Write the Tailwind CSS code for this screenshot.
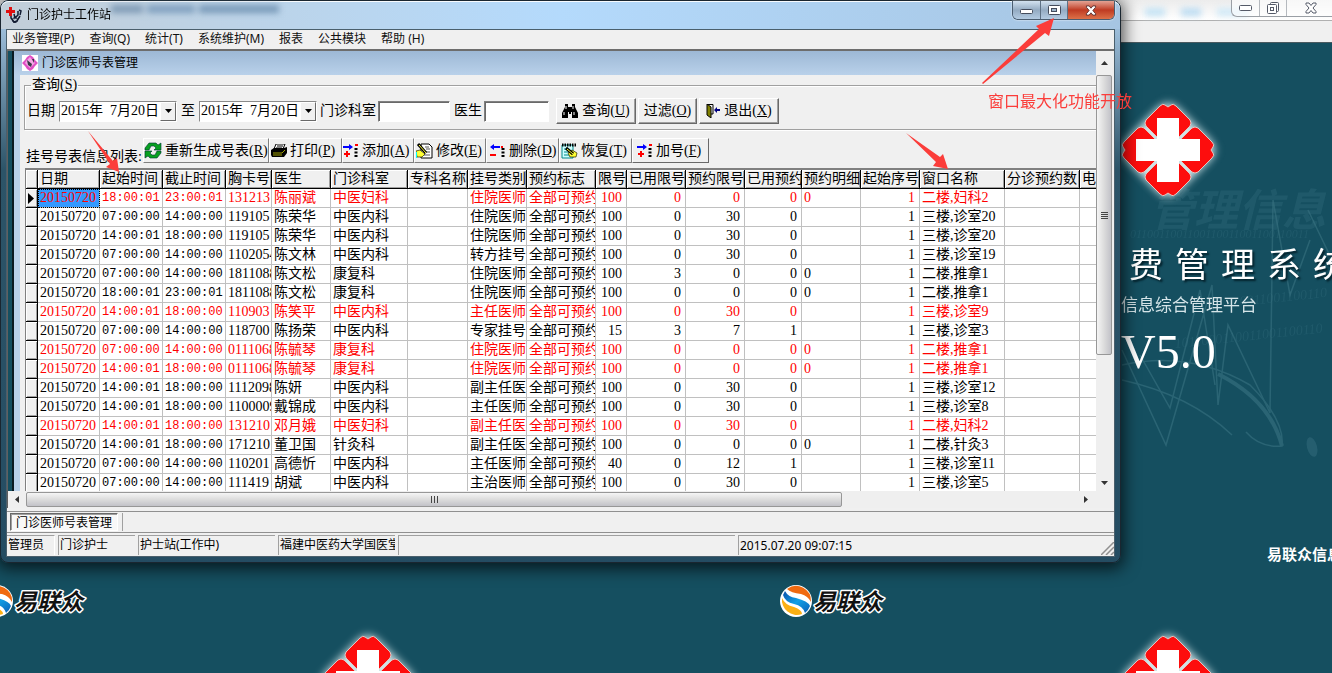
<!DOCTYPE html>
<html lang="zh-CN">
<head>
  <meta charset="UTF-8">
  <meta name="viewport" content="width=device-width, initial-scale=1.0">
  <title>门诊护士工作站</title>
  <script src="https://cdn.jsdelivr.net/npm/@tailwindcss/browser@4"></script>
</head>
<body class="font-['Noto_Sans','Noto_Sans_CJK_SC',sans-serif] text-xs text-black">
  <div class="relative h-screen overflow-hidden bg-[#154f60]">

    <!-- Parent window chrome -->
    <header class="relative h-[43px] border-b border-[#4a5a60] bg-[#f0f0f0]">
      <div class="h-[21px] border-b border-[#b0b0b0] bg-linear-to-b from-[#ececec] to-white"></div>
      <div class="absolute top-2 left-[1145px] flex gap-4 blur-[3px]">
        <span class="h-2 w-5 bg-[#c3e2f4]"></span>
        <span class="h-2 w-5 bg-[#bcdcf2]"></span>
        <span class="h-2 w-8 bg-[#d0e9f7]"></span>
      </div>
      <div class="absolute top-0 left-[1231px] flex h-[17px] rounded-bl-md border-b border-l border-[#9a9fa5] bg-white/60">
        <button type="button" aria-label="最小化" class="flex w-7 items-center justify-center border-r border-[#b5b9be]">
          <svg width="13" height="6"><rect x=".5" y=".5" width="12" height="5" rx="1" fill="#fff" stroke="#555a68"/></svg>
        </button>
        <button type="button" aria-label="还原" class="flex w-[27px] items-center justify-center border-r border-[#b5b9be]">
          <svg width="13" height="13" fill="#fff" stroke="#555a68"><rect x="3.5" y=".5" width="8" height="9" rx="1"/><rect x=".5" y="2.500" width="9" height="9" rx="1"/><rect x="3.500" y="5.500" width="3" height="3"/></svg>
        </button>
        <button type="button" aria-label="关闭" class="flex w-12 items-center justify-center">
          <svg width="12" height="12" viewBox="0 0 12 12" fill="#fff" stroke="#555a68"><path d="M1 1h3l2 2.500L8 1h3v1.500L8 6l3 3.500V11H8L6 8.500 4 11H1V9.500L4 6 1 2.500z"/></svg>
        </button>
      </div>
    </header>

    <!-- Tiled wallpaper -->
    <svg class="absolute inset-0 h-full w-full" aria-hidden="true">
      <defs>
        <path id="petal" d="M-10 -12L-22 -24Q-24 -27 -22 -30L-8 -44Q-5 -47 -3 -45L0 -43L3 -45Q5 -47 8 -44L22 -30Q24 -27 22 -24L10 -12L0 0z"/>
        <g id="cross">
          <rect x="-37" y="-37" width="74" height="74" rx="14" transform="rotate(45)" fill="#cfe4e8" filter="url(#soft)"/>
          <g fill="#fd0d0d" stroke="#e4c4c0">
            <use href="#petal"/><use href="#petal" transform="rotate(90)"/>
            <use href="#petal" transform="rotate(180)"/><use href="#petal" transform="rotate(270)"/>
          </g>
          <path d="M-11 -32H11V-11H32V11H11V32H-11V11H-32V-11H-11z" fill="#fff"/>
        </g>
        <filter id="soft" x="-30%" y="-30%" width="160%" height="160%"><feGaussianBlur stdDeviation="4"/></filter>
        <linearGradient id="ball" x1="0" y1="0" x2="1" y2="1"><stop stop-color="#0a4fa8"/><stop offset=".5" stop-color="#12a0e6"/><stop offset="1" stop-color="#0a5fb8"/></linearGradient>
        <g id="brand">
          <circle r="16" fill="#fff"/>
          <path d="M-9 -12A15 15 0 0 1 15 1Q12 -5 5 -7Q-5 -8 -9 -12z" fill="#f06a10"/>
          <path d="M-11 -10Q-8 -4 0 -3Q12 0 14 5A15 15 0 0 1 9 12Q7 5 -2 3Q-11 1 -13 -6z" fill="url(#ball)"/>
          <path d="M-14 -3Q-11 4 -2 6Q6 9 6 13A15 15 0 0 1 -14 -3z" fill="#fbb014"/>
          <text x="17" y="9" font-size="23" font-style="italic" font-weight="700" font-family="'Noto Sans CJK SC', sans-serif" fill="#111" stroke="#fff" stroke-width="3" stroke-linejoin="round" paint-order="stroke">易联众</text>
        </g>
      </defs>
      <g fill="none" stroke="#4a8492" stroke-width="1.500" opacity=".4">
        <path d="M1122 350L1166 445L1212 285L1218 405L1228 325L1270 413L1273 200L1290 295L1310 240M1140 355L1170 408L1200 290L1215 385M1308 210L1332 260"/>
        <path d="M1122 365Q1190 350 1250 385Q1285 420 1282 446Q1260 448 1246 432M1122 380Q1190 395 1232 435"/>
        <path d="M1282 446Q1270 400 1218 374" stroke-width="4"/>
      </g>
      <ellipse cx="1312" cy="447" rx="5" ry="10" transform="rotate(-15 1312 447)" fill="#2c6576" opacity=".7"/>
      <g fill="#3a7484" opacity=".3" font-style="italic">
        <text x="1150" y="226" font-size="44" font-weight="700" font-family="'Noto Sans CJK SC', sans-serif">管理信息</text>
        <text x="1130" y="238" font-size="12" font-family="'Liberation Serif', serif">0110011001100110011001100110011</text>
        <text x="1240" y="306" font-size="14" font-family="'Liberation Serif', serif" transform="rotate(-6 1240 306)">0011001100110</text>
        <text x="1175" y="348" font-size="14" font-family="'Liberation Serif', serif" transform="rotate(-6 1175 348)">1011000110011001100110</text>
      </g>
      <use href="#cross" x="1168" y="150"/>
      <use href="#cross" x="1168" y="682"/>
      <use href="#cross" x="368" y="682"/>
      <use href="#brand" x="796" y="601"/>
      <use href="#brand" x="-3" y="601"/>
    </svg>
    <div class="absolute top-[240px] left-[1121px] font-['Noto_Sans_CJK_SC',sans-serif] whitespace-nowrap text-white">
      <h2 class="flex gap-3 pl-2 text-[34px] leading-[46px] text-shadow-[2px_2px_2px_#04222c]"><span>费</span><span>管</span><span>理</span><span>系</span><span>统</span></h2>
      <p class="text-[17px] leading-9 text-[#d5e4e8]">信息综合管理平台</p>
      <p class="font-['Liberation_Serif',serif] text-5xl leading-[60px]">V5.0</p>
    </div>
    <p class="absolute top-[544px] left-[1267px] font-['Noto_Sans_CJK_SC',sans-serif] text-[15px] leading-5 font-bold whitespace-nowrap text-white">易联众信息</p>

    <!-- Main window -->
    <div class="absolute top-0 right-[211px] left-0 rounded-lg border border-[#1a2630] bg-linear-to-b from-[#b5d4f2] via-[#2c5468] via-30% to-[#244c62] px-[5px] pb-[5px] shadow-[0_3px_16px_3px_#000a]">
      <div class="absolute inset-x-0 top-0 h-7 rounded-t-lg border-t border-white/90 bg-linear-to-r from-[#c2ced8] via-[#b4dafc] via-50% to-[#a6c5e2]"></div>
      <div class="absolute top-1 left-[110px] flex gap-1 blur-[3px]">
        <span class="h-2 w-8 bg-[#7f9ab5]"></span>
        <span class="h-2 w-12 bg-[#7f9fbe]"></span>
        <span class="h-2 w-20 bg-[#7899b8]"></span>
      </div>

      <div class="relative flex h-7 items-center gap-1">
        <svg width="17" height="17" viewBox="0 0 17 17" fill="none">
          <path d="M5 7v4l3 4 3-1 3-5M8 7l1 4 3-3V4M13 3l2 1-1 4" stroke="#111a30" stroke-width="1.500"/><circle cx="9" cy="13" r="2.500" stroke="#111a30"/>
          <path d="M3 0h3v3h3v3H6v3H3V6H0V3h3z" fill="#e01010"/>
        </svg>
        <h1 class="leading-5">门诊护士工作站</h1>
        <div class="ml-auto flex h-[19px] self-start overflow-hidden rounded-b-md border border-t-0 border-[#4b5d70] shadow-[0_0_2px_#fff]">
          <button type="button" aria-label="最小化" class="flex w-7 items-center justify-center border-r border-[#5d7185] bg-linear-to-b from-[#d3e2f0] via-[#94abc2] to-[#b3cbe2] pt-1">
            <svg width="13" height="6"><rect x=".5" y=".5" width="12" height="4" rx="1" fill="#fff" stroke="#444c5c"/></svg>
          </button>
          <button type="button" aria-label="最大化" class="flex w-[27px] items-center justify-center border-r border-[#5d7185] bg-linear-to-b from-[#d3e2f0] via-[#94abc2] to-[#b3cbe2]">
            <svg width="13" height="10" fill="#fff" stroke="#444c5c"><rect x=".5" y=".5" width="12" height="9" rx="1"/><rect x="3.500" y="3.500" width="5" height="3" fill="#9fb6cc"/></svg>
          </button>
          <button type="button" aria-label="关闭" class="flex w-[46px] items-center justify-center bg-linear-to-b from-[#e2a294] via-[#bf3a22] to-[#dd7048]">
            <svg width="12" height="11" viewBox="0 0 12 12" fill="#fff" stroke="#5a3030"><path d="M1 1h3l2 2.500L8 1h3v1.500L8 6l3 3.500V11H8L6 8.500 4 11H1V9.500L4 6 1 2.500z"/></svg>
          </button>
        </div>
      </div>

      <div class="relative border border-[#4a5f6c] bg-[#f0f0f0]">
        <nav class="flex h-[21px] gap-[15px] border-b-2 border-b-[#6d6d6d] pl-[5px] leading-[18px] whitespace-nowrap text-[#111]">
          <a href="#">业务管理(P)</a>
          <a href="#">查询(Q)</a>
          <a href="#">统计(T)</a>
          <a href="#">系统维护(M)</a>
          <a href="#">报表</a>
          <a href="#">公共模块</a>
          <a href="#">帮助 (H)</a>
        </nav>

        <!-- MDI area -->
        <div class="flex border-l border-[#606060] bg-[#154f60]">
          <section class="ml-1 min-w-0 flex-1 overflow-hidden border-l-2 border-[#0b1b22] bg-[#f0f0f0]">
            <div class="flex h-6 items-center gap-1 bg-linear-to-b from-[#9db8d5] to-[#b9d1ea] pl-2">
              <svg width="16" height="16" viewBox="0 0 16 16"><path fill="#fff" d="M0 0h16v16H0z"/><path d="M8 0l3 2 2 3 3 3-3 3-2 3-3 2-3-2-2-3-3-3 3-3 2-3z" fill="#e04fc4"/><path d="M8 2l3 4 2 2-5 5-5-5 2-3z" fill="#f5a6e6"/><path d="M5 5l5 4-1 3-3-2zM10 4h2v4z" fill="#333b44"/></svg>
              <h2>门诊医师号表管理</h2>
            </div>
            <div class="border-l-[6px] border-[#b9d1ea] pt-px pl-1 font-['Liberation_Serif','Noto_Sans_CJK_SC',serif] text-sm whitespace-nowrap">
              <fieldset class="-mr-3 h-[54px] border border-[#a0a0a0] px-[2px] shadow-[1px_1px_0_#fff,inset_1px_1px_0_#fff]">
                <legend class="ml-1 px-px leading-[18px]">查询(<u>S</u>)</legend>
                <div class="flex items-center pt-1">
                  <label for="from">日期</label>
                  <span class="ml-1 flex h-[21px] w-[118px] border border-[#8a8a8a] border-r-white border-b-white bg-white">
                    <input id="from" type="text" value="2015年  7月20日" class="min-w-0 flex-1 pl-px">
                    <button type="button" aria-label="选择日期" class="flex w-4 items-center justify-center border border-r-[#696969] border-b-[#696969] border-l-white border-t-white bg-[#f0f0f0]"><svg width="7" height="4"><path d="M0 0h7L3.500 4z"/></svg></button>
                  </span>
                  <label for="to" class="mx-1">至</label>
                  <span class="flex h-[21px] w-[118px] border border-[#8a8a8a] border-r-white border-b-white bg-white">
                    <input id="to" type="text" value="2015年  7月20日" class="min-w-0 flex-1 pl-px">
                    <button type="button" aria-label="选择日期" class="flex w-4 items-center justify-center border border-r-[#696969] border-b-[#696969] border-l-white border-t-white bg-[#f0f0f0]"><svg width="7" height="4"><path d="M0 0h7L3.500 4z"/></svg></button>
                  </span>
                  <label for="dept" class="ml-[3px]">门诊科室</label>
                  <input id="dept" type="text" class="ml-[2px] h-[21px] w-[72px] border border-[#808080] border-r-white border-b-white bg-white shadow-[inset_1px_1px_0_#696969]">
                  <label for="doctor" class="ml-1">医生</label>
                  <input id="doctor" type="text" class="ml-[2px] h-[21px] w-[65px] border border-[#808080] border-r-white border-b-white bg-white shadow-[inset_1px_1px_0_#696969]">
                  <button type="button" class="ml-[7px] flex h-[26px] w-20 items-center justify-center gap-1 border border-white border-r-[#696969] border-b-[#696969] shadow-[inset_-1px_-1px_0_#a0a0a0]">
                    <svg width="16" height="14" viewBox="0 0 16 14"><path d="M3 0h3v3h4V0h3v3l3 6v5h-6V8H9v2H7V8H6v6H0V9l3-6z"/><path d="M4 2v3M2 8v3M11 2v3M12 8v3" stroke="#fff"/></svg>
                    <span>查询(<u>U</u>)</span>
                  </button>
                  <button type="button" class="ml-[2px] h-[26px] w-[59px] border border-white border-r-[#696969] border-b-[#696969] shadow-[inset_-1px_-1px_0_#a0a0a0]">过滤(<u>O</u>)</button>
                  <button type="button" class="ml-[2px] flex h-[26px] w-20 items-center justify-center gap-1 border border-white border-r-[#696969] border-b-[#696969] shadow-[inset_-1px_-1px_0_#a0a0a0]">
                    <svg width="14" height="14" viewBox="0 0 14 14"><path d="M1 0l4 3v11l-4-3z" fill="#808000" stroke="#000"/><path d="M1 .5h6V10H5" fill="none" stroke="#000"/><path d="M8 6l3-3v2h3v2h-3v2z" fill="#000080"/></svg>
                    <span>退出(<u>X</u>)</span>
                  </button>
                </div>
              </fieldset>

              <div class="mt-2 flex h-[25px]">
                <span class="w-[119px] overflow-hidden pt-[9px] pl-[2px] leading-5">挂号号表信息列表:</span>
                <div class="flex">
                  <button type="button" class="flex w-[126px] items-center gap-[3px] overflow-hidden border border-white border-r-[#808080] border-b-[#808080]">
                    <svg class="shrink-0" width="18" height="17" viewBox="0 0 18 17" fill="#08a020" stroke="#033" stroke-width=".6"><path d="M1 8V6l4-5h7l2 2 3-2v7h-7l2-2-2-2H7L5 8z"/><path d="M17 9v2l-4 5H6l-2-2-3 2V9h7l-2 2 2 2h3l2-4z"/></svg>
                    <span>重新生成号表(<u>R</u>)</span>
                  </button>
                  <button type="button" class="flex w-[73px] items-center gap-[3px] overflow-hidden border border-white border-r-[#808080] border-b-[#808080] pl-px">
                    <svg class="shrink-0" width="16" height="14" viewBox="0 0 16 14"><path d="M5 0h9l-2 5H3z" fill="#fff" stroke="#000"/><path d="M6 2h6M5 4h6" stroke="#000"/><path d="M0 6l3-2h10l3-1v6l-3 4H1l-1-2z"/><path d="M2 9h9l3-3M2 11h9" stroke="#a0a000" fill="none"/></svg>
                    <span>打印(<u>P</u>)</span>
                  </button>
                  <button type="button" class="flex w-[72px] items-center gap-[3px] overflow-hidden border border-white border-r-[#808080] border-b-[#808080]">
                    <svg class="shrink-0" width="16" height="14" viewBox="0 0 16 14"><path d="M0 2h6V0l4 3-4 3V4H0z" fill="#00f"/><path d="M3 7h2v2h2v2H5v2H3v-2H1V9h2z" fill="#f00"/><path d="M13 4v10" stroke="#000" stroke-width="3" stroke-dasharray="2 1.500"/><path d="M12 0h3v2h-3z" fill="#f00"/></svg>
                    <span>添加(<u>A</u>)</span>
                  </button>
                  <button type="button" class="flex w-[72px] items-center gap-[3px] overflow-hidden border border-white border-r-[#808080] border-b-[#808080] pl-px">
                    <svg class="shrink-0" width="17" height="16" viewBox="0 0 17 16"><path d="M5 1h8l3 3v11H5z" fill="#fff" stroke="#000"/><path d="M9 4h4M10 6h4M9 9h5M8 12h6" stroke="#555"/><path d="M0 8l4-1 5 4-3 3H1z" fill="#ff3" stroke="#220" stroke-width=".7"/><path d="M2 1l8 9" stroke="#000" stroke-width="3"/><path d="M3 2l7 8" stroke="#ff3"/><path d="M0 9v6" stroke="#0ff" stroke-width="2"/></svg>
                    <span>修改(<u>E</u>)</span>
                  </button>
                  <button type="button" class="flex w-[73px] items-center gap-[3px] overflow-hidden border border-white border-r-[#808080] border-b-[#808080] pl-[3px]">
                    <svg class="shrink-0" width="16" height="14" viewBox="0 0 16 14"><path d="M10 2H4V0L0 3l4 3V4h6z" fill="#00f"/><path d="M0 10h6v2H0z" fill="#f00"/><path d="M13 4v10" stroke="#000" stroke-width="3" stroke-dasharray="2 1.500"/><path d="M11 2h2v2h-2z" fill="#f00"/></svg>
                    <span>删除(<u>D</u>)</span>
                  </button>
                  <button type="button" class="flex w-[73px] items-center gap-[3px] overflow-hidden border border-white border-r-[#808080] border-b-[#808080] pl-px">
                    <svg class="shrink-0" width="17" height="16" viewBox="0 0 17 16"><path d="M1 2h11v13H1z" fill="#cff" stroke="#088"/><path d="M1 2h14" stroke="#000" stroke-width="3" stroke-dasharray="1.500 1"/><path d="M3 6h4M3 9h4M3 12h6" stroke="#088"/><path d="M7 10l4-3 5 3-1 4H9z" fill="#ff3" stroke="#220" stroke-width=".7"/><path d="M5 5l7 6" stroke="#000" stroke-width="3"/><path d="M6 6l6 5" stroke="#ff3"/></svg>
                    <span>恢复(<u>T</u>)</span>
                  </button>
                  <button type="button" class="flex w-[77px] items-center gap-[3px] overflow-hidden border border-white border-r-[#696969] border-b-[#696969] pl-1">
                    <svg class="shrink-0" width="16" height="14" viewBox="0 0 16 14"><path d="M0 2h6V0l4 3-4 3V4H0z" fill="#00f"/><path d="M3 7h2v2h2v2H5v2H3v-2H1V9h2z" fill="#f00"/><path d="M13 4v10" stroke="#000" stroke-width="3" stroke-dasharray="2 1.500"/><path d="M12 0h3v2h-3z" fill="#f00"/></svg>
                    <span>加号(<u>F</u>)</span>
                  </button>
                </div>
              </div>

              <div class="mt-[5px] -mb-[2px] ml-px overflow-hidden border-t-2 border-l border-[#808080] bg-white">
                <table class="w-[1129px] table-fixed border-separate border-spacing-0 leading-[18px]">
                  <colgroup>
                    <col class="w-3"><col class="w-[62px]"><col class="w-[63px]"><col class="w-[63px]"><col class="w-[46px]"><col class="w-[59px]"><col class="w-[77px]"><col class="w-[60px]"><col class="w-[59px]"><col class="w-[69px]"><col class="w-[31px]"><col class="w-[59px]"><col class="w-[59px]"><col class="w-[57px]"><col class="w-[59px]"><col class="w-[59px]"><col class="w-[85px]"><col class="w-[75px]"><col class="w-[75px]">
                  </colgroup>
                  <thead><tr id="head"></tr></thead>
                  <tbody id="rows"></tbody>
                </table>
              </div>
            </div>
          </section>

          <!-- Vertical scrollbar -->
          <div class="flex w-[18px] flex-col bg-[#efefef] pr-[2px]" aria-hidden="true">
            <div class="flex h-6 items-center justify-center"><svg width="7" height="4"><path d="M0 4h7L3.500 0z" fill="#333"/></svg></div>
            <div class="flex h-[280px] flex-col items-center justify-center gap-px rounded-xs border border-[#979797] bg-linear-to-r from-[#f5f5f5] via-[#dcdcdc] to-[#c2c2c8]">
              <span class="h-px w-[7px] bg-[#444]"></span><span class="h-px w-[7px] bg-[#444]"></span><span class="h-px w-[7px] bg-[#444]"></span><span class="h-px w-[7px] bg-[#444]"></span>
            </div>
            <div class="mt-auto flex h-4 items-center justify-center"><svg width="7" height="4"><path d="M0 0h7L3.500 4z" fill="#333"/></svg></div>
          </div>
        </div>

        <!-- Horizontal scrollbar -->
        <div class="relative flex h-[17px] border-l border-[#606060] bg-[#efefef] py-px pr-[18px]" aria-hidden="true">
          <div class="flex w-[18px] items-center justify-center"><svg width="4" height="7"><path d="M4 0v7L0 3.500z" fill="#333"/></svg></div>
          <div class="flex w-3/4 items-center justify-center gap-[2px] rounded-xs border border-[#979797] bg-linear-to-b from-[#f5f5f5] via-[#dcdcdc] to-[#c2c2c8]">
            <span class="h-[7px] w-px bg-[#444]"></span><span class="h-[7px] w-px bg-[#444]"></span><span class="h-[7px] w-px bg-[#444]"></span>
          </div>
          <div class="mr-2 ml-auto flex items-center"><svg width="4" height="7"><path d="M0 0v7l4-3.500z" fill="#333"/></svg></div>
        </div>

        <!-- Window tabs -->
        <div class="mt-[3px] flex h-[22px] border-y border-[#909090] pt-px pb-px pl-[3px] font-['Noto_Sans_CJK_SC',sans-serif]">
          <button type="button" class="border border-[#696969] border-r-white border-b-white bg-[#f8f8f8] px-[5px] leading-4 shadow-[inset_1px_1px_0_#a0a0a0]">门诊医师号表管理</button>
          <span class="ml-1 w-px bg-[#a0a0a0]"></span>
        </div>

        <footer class="mt-[2px] flex h-[21px] gap-[3px] pb-px leading-[18px] whitespace-nowrap">
          <span class="w-12 overflow-hidden border-t border-r border-[#a0a0a0] border-r-white pl-px">管理员</span>
          <span class="w-[77px] overflow-hidden border-t border-l border-[#a0a0a0] pl-px">门诊护士</span>
          <span class="w-[137px] overflow-hidden border-t border-l border-[#a0a0a0] pl-px">护士站(工作中)</span>
          <span class="w-[117px] overflow-hidden border-t border-l border-[#a0a0a0] pl-px">福建中医药大学国医堂</span>
          <span class="w-[337px] overflow-hidden border-t border-l border-[#a0a0a0]"></span>
          <span class="flex flex-1 items-end justify-between border-t border-l border-[#a0a0a0] pl-px">2015.07.20 09:07:15
            <svg width="13" height="13" stroke="#909090" stroke-width="1.500"><path d="M0 13L13 0M5 13l8-8M10 13l3-3"/></svg>
          </span>
        </footer>
      </div>
    </div>

    <!-- Annotations -->
    <svg class="pointer-events-none absolute inset-0 h-full w-full" fill="#fb3d3a" aria-hidden="true">
      <path d="M982 83L1039 29L1036 26L1054 18L1049 36L1045 33L983 84z"/>
      <path d="M906 133L940 157L943 154L948 169L933 166L936 162z"/>
      <path d="M88 131L113 161L117 158L119 172L106 167L110 164z"/>
    </svg>
    <p class="absolute top-[88px] left-[988px] font-['Noto_Sans_CJK_SC',sans-serif] text-base leading-6 whitespace-nowrap text-[#fb3d3a]">窗口最大化功能开放</p>
  </div>

  <script>
    const heads = ['', '日期', '起始时间', '截止时间', '胸卡号', '医生', '门诊科室', '专科名称', '挂号类别', '预约标志', '限号', '已用限号', '预约限号', '已用预约', '预约明细', '起始序号', '窗口名称', '分诊预约数', '电'];
    const A = '07:00:00', B = '14:00:00', C = '14:00:01', D = '18:00:00', E = '18:00:01', F = '23:00:01';
    // red, start, end, card, doctor, department, type, limit, used, bookable, booked, detail, window
    const data = [
      [1, E, F, '131213', '陈丽斌', '中医妇科', '住院医师', 100, 0, 0, 0, '0', '二楼,妇科2'],
      [0, A, B, '119105', '陈荣华', '中医内科', '住院医师', 100, 0, 30, 0, '', '三楼,诊室20'],
      [0, C, D, '119105', '陈荣华', '中医内科', '住院医师', 100, 0, 30, 0, '', '三楼,诊室20'],
      [0, A, B, '1102054', '陈文林', '中医内科', '转方挂号', 100, 0, 30, 0, '', '三楼,诊室19'],
      [0, A, B, '1811088', '陈文松', '康复科', '住院医师', 100, 3, 0, 0, '0', '二楼,推拿1'],
      [0, E, F, '1811088', '陈文松', '康复科', '住院医师', 100, 0, 0, 0, '0', '二楼,推拿1'],
      [1, C, D, '110903', '陈笑平', '中医内科', '主任医师', 100, 0, 30, 0, '', '三楼,诊室9'],
      [0, A, B, '118700', '陈扬荣', '中医内科', '专家挂号', 15, 3, 7, 1, '', '三楼,诊室3'],
      [1, A, B, '0111068', '陈毓琴', '康复科', '住院医师', 100, 0, 0, 0, '0', '二楼,推拿1'],
      [1, C, D, '0111068', '陈毓琴', '康复科', '住院医师', 100, 0, 0, 0, '0', '二楼,推拿1'],
      [0, C, D, '1112098', '陈妍', '中医内科', '副主任医', 100, 0, 30, 0, '', '三楼,诊室12'],
      [0, C, D, '1100009', '戴锦成', '中医内科', '主任医师', 100, 0, 30, 0, '', '三楼,诊室8'],
      [1, C, D, '131210', '邓月娥', '中医妇科', '副主任医', 100, 0, 30, 0, '', '二楼,妇科2'],
      [0, C, D, '171210', '董卫国', '针灸科', '副主任医', 100, 0, 0, 0, '0', '二楼,针灸3'],
      [0, A, B, '110201', '高德忻', '中医内科', '主任医师', 40, 0, 12, 1, '', '三楼,诊室11'],
      [0, A, B, '111419', '胡斌', '中医内科', '主治医师', 100, 0, 30, 0, '', '三楼,诊室5'],
    ];

    document.getElementById('head').innerHTML = heads.map(h =>
      `<th class="h-[19px] overflow-hidden border-r border-b border-black bg-[#f0f0f0] pl-[2px] text-left font-normal shadow-[inset_1px_1px_0_#fff,inset_-1px_-1px_0_#a0a0a0]">${h}</th>`).join('');

    const cell = (v, cls) => `<td class="overflow-hidden border-r border-b border-[#c0c0c0] ${cls}">${v}</td>`;
    const left = 'pl-[2px]', right = 'pr-1 text-right', time = "pl-[2px] font-['Liberation_Mono',monospace] text-xs leading-[18px]";
    document.getElementById('rows').innerHTML = data.map((d, i) => {
      const [red, from, to, card, doctor, dept, type, limit, used, bookable, booked, detail, win] = d;
      const mark = i === 0 ? '<svg class="ml-[2px]" width="6" height="11"><path d="M0 0l6 5.500L0 11z"/></svg>' : '';
      return `<tr class="h-[19px] ${red ? 'text-[#f00]' : ''}">
        <td class="border-r border-b border-black bg-[#f0f0f0] shadow-[inset_1px_1px_0_#fff,inset_-1px_-1px_0_#a0a0a0]">${mark}</td>
        ${cell('20150720', i === 0 ? 'pl-[2px] bg-[#3399ff] outline-1 -outline-offset-1 outline-dotted outline-black' : left)}
        ${cell(from, time)}${cell(to, time)}${cell(card, left)}${cell(doctor, left)}${cell(dept, left)}${cell('', left)}
        ${cell(type, left)}${cell('全部可预约', left)}${cell(limit, right)}${cell(used, right)}${cell(bookable, right)}${cell(booked, right)}
        ${cell(detail, left)}${cell('1', right)}${cell(win, left)}${cell('', left)}${cell('', left)}
      </tr>`;
    }).join('');
  </script>
</body>
</html>
